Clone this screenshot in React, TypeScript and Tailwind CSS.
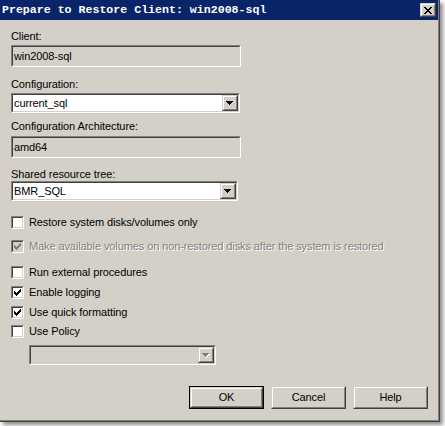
import React from "react";

function Sunken({ className = "", inner = "", children }: { className?: string; inner?: string; children?: React.ReactNode }) {
  return (
    <div className={`border border-t-[#808080] border-l-[#808080] border-b-white border-r-white ${className}`}>
      <div className={`h-full border border-t-[#404040] border-l-[#404040] border-b-[#d4d0c8] border-r-[#d4d0c8] ${inner}`}>{children}</div>
    </div>
  );
}

function Raised({ className = "", children }: { className?: string; children?: React.ReactNode }) {
  return (
    <div className={`border border-t-[#d4d0c8] border-l-[#d4d0c8] border-b-[#404040] border-r-[#404040] bg-[#d4d0c8] ${className}`}>
      <div className="h-full w-full border border-t-white border-l-white border-b-[#808080] border-r-[#808080] flex items-center justify-center">
        {children}
      </div>
    </div>
  );
}

function Arrow({ disabled = false }: { disabled?: boolean }) {
  const c = disabled ? "#808080" : "#000000";
  return (
    <svg width="8" height="5" viewBox="0 0 8 5" shapeRendering="crispEdges">
      {disabled && (
        <g fill="#ffffff">
          <rect x="1" y="1" width="7" height="1" />
          <rect x="2" y="2" width="5" height="1" />
          <rect x="3" y="3" width="3" height="1" />
          <rect x="4" y="4" width="1" height="1" />
        </g>
      )}
      <g fill={c}>
        <rect x="0" y="0" width="7" height="1" />
        <rect x="1" y="1" width="5" height="1" />
        <rect x="2" y="2" width="3" height="1" />
        <rect x="3" y="3" width="1" height="1" />
      </g>
    </svg>
  );
}

function Select({ className = "", value, disabled = false }: { className?: string; value?: string; disabled?: boolean }) {
  return (
    <Sunken className={className} inner={disabled ? "bg-[#d4d0c8] flex items-stretch" : "bg-white flex items-stretch"}>
      <div className="flex-1 pl-[1px] leading-[16px] text-[11px] text-black whitespace-nowrap overflow-hidden">{value}</div>
      <Raised className="w-[16px] h-full">
        <Arrow disabled={disabled} />
      </Raised>
    </Sunken>
  );
}

function Check({ color }: { color: string }) {
  const px: [number, number][] = [
    [6, 0],
    [5, 1], [6, 1],
    [0, 2], [4, 2], [5, 2], [6, 2],
    [0, 3], [1, 3], [3, 3], [4, 3], [5, 3],
    [0, 4], [1, 4], [2, 4], [3, 4], [4, 4],
    [1, 5], [2, 5], [3, 5],
    [2, 6],
  ];
  return (
    <svg width="7" height="7" viewBox="0 0 7 7" shapeRendering="crispEdges" className="absolute left-[1px] top-[1px]">
      {px.map(([x, y], i) => (
        <rect key={i} x={x} y={y} width="1" height="1" fill={color} />
      ))}
    </svg>
  );
}

function CheckRow({ label, checked = false, disabled = false, className = "" }: { label: string; checked?: boolean; disabled?: boolean; className?: string }) {
  return (
    <div className={`flex items-center h-[13px] ${className}`}>
      <Sunken className="w-[13px] h-[13px] shrink-0" inner={disabled ? "bg-[#d4d0c8] relative" : "bg-white relative"}>
        {checked && <Check color={disabled ? "#808080" : "#000000"} />}
      </Sunken>
      <span
        className={`ml-[5px] text-[11px] leading-[13px] whitespace-nowrap ${disabled ? "text-[#808080] [text-shadow:1px_1px_0_#ffffff]" : "text-black"}`}
      >
        {label}
      </span>
    </div>
  );
}

function Btn({ label, def = false, className = "" }: { label: string; def?: boolean; className?: string }) {
  const inner = (
    <Raised className="w-full h-full">
      <span className="text-[11px] leading-[13px] text-black">{label}</span>
    </Raised>
  );
  return def ? (
    <div className={`border border-black w-[75px] h-[23px] ${className}`}>{inner}</div>
  ) : (
    <div className={`w-[75px] h-[23px] ${className}`}>{inner}</div>
  );
}

export default function App() {
  return (
    <div className="w-[445px] h-[426px] bg-white overflow-hidden font-['Liberation_Sans',Arial,sans-serif] tracking-[-0.1px]">
      <div className="w-[440px] h-[422px] border-r border-b border-r-[#404040] border-b-[#404040] shadow-[3px_3px_4px_rgba(0,0,0,0.45)]">
        <div className="w-full h-full border-r border-b border-r-[#808080] border-b-[#808080] bg-[#d4d0c8] flex flex-col">
          {/* Title bar */}
          <div className="h-[20px] bg-[#0a246a] flex items-center shrink-0">
            <div className="flex-1 pl-[2px] text-white font-bold text-[11.6px] leading-[20px] tracking-normal whitespace-nowrap font-['Liberation_Mono',monospace]">
              Prepare to Restore Client: win2008-sql
            </div>
            <Raised className="w-[16px] h-[14px] mr-[2px]">
              <svg width="8" height="7" viewBox="0 0 8 7" shapeRendering="crispEdges">
                <g fill="#000">
                  <rect x="0" y="0" width="2" height="1" />
                  <rect x="6" y="0" width="2" height="1" />
                  <rect x="1" y="1" width="2" height="1" />
                  <rect x="5" y="1" width="2" height="1" />
                  <rect x="2" y="2" width="4" height="1" />
                  <rect x="3" y="3" width="2" height="1" />
                  <rect x="2" y="4" width="4" height="1" />
                  <rect x="1" y="5" width="2" height="1" />
                  <rect x="5" y="5" width="2" height="1" />
                  <rect x="0" y="6" width="2" height="1" />
                  <rect x="6" y="6" width="2" height="1" />
                </g>
              </svg>
            </Raised>
          </div>

          {/* Body */}
          <div className="flex flex-col pl-[11px] text-[11px] text-black">
            <div className="mt-[10px] h-[13px] leading-[13px]">Client:</div>
            <Sunken className="mt-[2px] w-[230px] h-[22px]" inner="bg-[#d4d0c8] flex items-center pl-[1px]">
              <span className="leading-[13px]">win2008-sql</span>
            </Sunken>

            <div className="mt-[11px] h-[13px] leading-[13px]">Configuration:</div>
            <Select className="mt-[2px] w-[229px] h-[20px]" value="current_sql" />

            <div className="mt-[7px] h-[13px] leading-[13px]">Configuration Architecture:</div>
            <Sunken className="mt-[3px] w-[230px] h-[22px]" inner="bg-[#d4d0c8] flex items-center pl-[1px]">
              <span className="leading-[13px]">amd64</span>
            </Sunken>

            <div className="mt-[10px] h-[13px] leading-[13px]">Shared resource tree:</div>
            <Select className="mt-0 w-[227px] h-[20px]" value="BMR_SQL" />

            <CheckRow className="mt-[15px]" label="Restore system disks/volumes only" />
            <CheckRow className="mt-[11px]" label="Make available volumes on non-restored disks after the system is restored" checked disabled />
            <CheckRow className="mt-[13px]" label="Run external procedures" />
            <CheckRow className="mt-[7px]" label="Enable logging" checked />
            <CheckRow className="mt-[7px]" label="Use quick formatting" checked />
            <CheckRow className="mt-[6px]" label="Use Policy" />

            <Select className="mt-[7px] ml-[18px] w-[187px] h-[20px]" disabled />

            <div className="mt-[21px] flex justify-end pr-[10px]">
              <Btn label="OK" def />
              <Btn label="Cancel" className="ml-[7px]" />
              <Btn label="Help" className="ml-[7px]" />
            </div>
          </div>
        </div>
      </div>
    </div>
  );
}
